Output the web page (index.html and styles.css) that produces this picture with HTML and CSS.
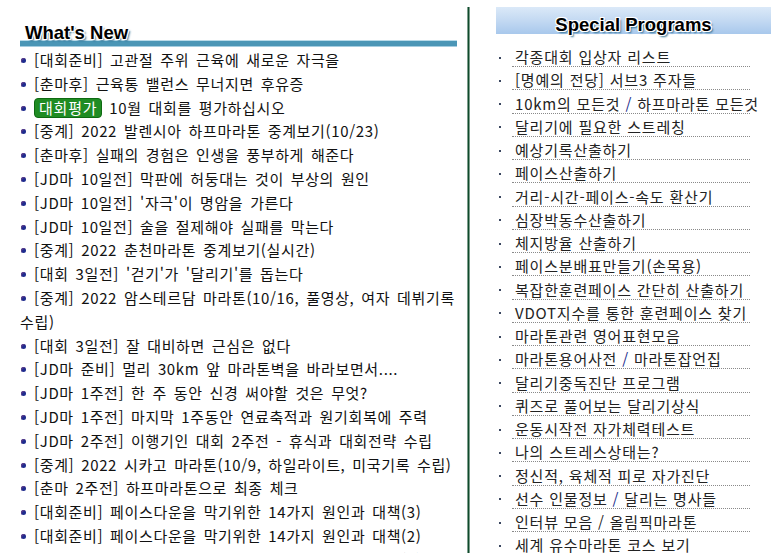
FILE: index.html
```html
<!DOCTYPE html>
<html lang="ko">
<head>
<meta charset="utf-8">
<title>What's New / Special Programs</title>
<link rel="stylesheet" href="styles.css">
</head>
<body>
<div class="page">
  <section class="news">
    <h2 class="news-head"><span class="head-text">What's New</span></h2>
    <ul class="news-list">
      <li>[대회준비] 고관절 주위 근육에 새로운 자극을</li>
      <li>[춘마후] 근육통 밸런스 무너지면 후유증</li>
      <li><span class="badge">대회평가</span> 10월 대회를 평가하십시오</li>
      <li>[중계] 2022 발렌시아 하프마라톤 중계보기(10/23)</li>
      <li>[춘마후] 실패의 경험은 인생을 풍부하게 해준다</li>
      <li>[JD마 10일전] 막판에 허둥대는 것이 부상의 원인</li>
      <li>[JD마 10일전] '자극'이 명암을 가른다</li>
      <li>[JD마 10일전] 술을 절제해야 실패를 막는다</li>
      <li>[중계] 2022 춘천마라톤 중계보기(실시간)</li>
      <li>[대회 3일전] '걷기'가 '달리기'를 돕는다</li>
      <li>[중계] 2022 암스테르담 마라톤(10/16, 풀영상, 여자 데뷔기록 수립)</li>
      <li>[대회 3일전] 잘 대비하면 근심은 없다</li>
      <li>[JD마 준비] 멀리 30km 앞 마라톤벽을 바라보면서....</li>
      <li>[JD마 1주전] 한 주 동안 신경 써야할 것은 무엇?</li>
      <li>[JD마 1주전] 마지막 1주동안 연료축적과 원기회복에 주력</li>
      <li>[JD마 2주전] 이행기인 대회 2주전 - 휴식과 대회전략 수립</li>
      <li>[중계] 2022 시카고 마라톤(10/9, 하일라이트, 미국기록 수립)</li>
      <li>[춘마 2주전] 하프마라톤으로 최종 체크</li>
      <li>[대회준비] 페이스다운을 막기위한 14가지 원인과 대책(3)</li>
      <li>[대회준비] 페이스다운을 막기위한 14가지 원인과 대책(2)</li>
      <li>[대회준비] 페이스다운을 막기위한 14가지 원인과 대책(1)</li>
    </ul>
  </section>
  <div class="divider"></div>
  <section class="programs">
    <h2 class="prog-head"><span class="head-text">Special Programs</span></h2>
    <ul class="prog-list">
      <li><span class="link">각종대회 입상자 리스트</span></li>
      <li><span class="link">[명예의 전당] 서브3 주자들</span></li>
      <li><span class="link">10km의 모든것 <span class="sep">/</span> 하프마라톤 모든것</span></li>
      <li><span class="link">달리기에 필요한 스트레칭</span></li>
      <li><span class="link">예상기록산출하기</span></li>
      <li><span class="link">페이스산출하기</span></li>
      <li><span class="link">거리-시간-페이스-속도 환산기</span></li>
      <li><span class="link">심장박동수산출하기</span></li>
      <li><span class="link">체지방율 산출하기</span></li>
      <li><span class="link">페이스분배표만들기(손목용)</span></li>
      <li><span class="link">복잡한훈련페이스 간단히 산출하기</span></li>
      <li><span class="link">VDOT지수를 통한 훈련페이스 찾기</span></li>
      <li><span class="link">마라톤관련 영어표현모음</span></li>
      <li><span class="link">마라톤용어사전 <span class="sep">/</span> 마라톤잡언집</span></li>
      <li><span class="link">달리기중독진단 프로그램</span></li>
      <li><span class="link">퀴즈로 풀어보는 달리기상식</span></li>
      <li><span class="link">운동시작전 자가체력테스트</span></li>
      <li><span class="link">나의 스트레스상태는?</span></li>
      <li><span class="link">정신적, 육체적 피로 자가진단</span></li>
      <li><span class="link">선수 인물정보 <span class="sep">/</span> 달리는 명사들</span></li>
      <li><span class="link">인터뷰 모음 / 올림픽마라톤</span></li>
      <li><span class="link">세계 유수마라톤 코스 보기</span></li>
    </ul>
  </section>
</div>
</body>
</html>
```
FILE: styles.css
```css
html, body {
  margin: 0;
  padding: 0;
  background: #ffffff;
}
body {
  font-family: "Noto Sans CJK KR", "Liberation Sans", sans-serif;
  color: #111;
  overflow: hidden;
}
.page {
  display: flex;
  align-items: flex-start;
  height: 553px;
}
ul {
  list-style: none;
  margin: 0;
  padding: 0;
}
h2 {
  margin: 0;
  font-weight: normal;
}
.head-text {
  font-family: "Liberation Sans", "DejaVu Sans", sans-serif;
  font-weight: bold;
  font-size: 18.5px;
  color: #000;
  text-shadow:
    1px 0 0 #fff, -1px 0 0 #fff, 0 1px 0 #fff, 0 -1px 0 #fff,
    1px 1px 0 #fff, -1px -1px 0 #fff, 1px -1px 0 #fff, -1px 1px 0 #fff,
    2px 2px 2px #2e6f92;
}

/* left column */
.news {
  width: 437px;
  margin-left: 20px;
  margin-top: 20px;
}
.news-head {
  height: 27px;
  padding-left: 5px;
  line-height: 17px;
  background: linear-gradient(to bottom,
    transparent 0, transparent 20px,
    #b9dbe9 20px, #b9dbe9 21px,
    #4b96b6 21px, #4b96b6 26px,
    #a5cde0 26px, #a5cde0 27px);
}
.news-list {
  margin-top: 1px;
  width: 447px;
}
.news-list li {
  font-size: 15px;
  line-height: 23.8px;
  letter-spacing: 0.65px;
  word-spacing: 2px;
  white-space: normal;
}
.news-list li::before {
  content: "";
  display: inline-block;
  width: 5px;
  height: 5px;
  border-radius: 50%;
  background: #1e2c8e;
  box-shadow: inset 1px 1px 0 #5a3b8a;
  margin-left: 1px;
  margin-right: 8px;
  vertical-align: 3px;
}
.badge {
  display: inline-block;
  background: #1f8c23;
  border: 1px solid #0e6a12;
  color: #fff;
  border-radius: 4px;
  padding: 0 4px;
  line-height: 18px;
  letter-spacing: 0.8px;
  word-spacing: 0;
}

/* divider */
.divider {
  width: 1px;
  margin-left: 10px;
  margin-top: 7px;
  height: 546px;
  background: #0f4a2c;
  border-left: 1px solid #7d9e8c;
  border-right: 1px solid #7d9e8c;
}

/* right column */
.programs {
  width: 275px;
  margin-left: 26px;
  margin-top: 7px;
}
.prog-head {
  height: 27px;
  line-height: 27px;
  text-align: center;
  background: linear-gradient(to bottom, #dbe9f8 0%, #c3d9f2 50%, #a8c8ec 100%);
}
.prog-list {
  margin-top: 14px;
}
.prog-list li {
  display: flex;
  align-items: center;
  padding-left: 3px;
  margin-bottom: 4.25px;
}
.prog-list li::before {
  content: "";
  width: 2px;
  height: 2px;
  background: #3a4660;
  margin-right: 11px;
  flex: none;
}
.link {
  display: block;
  width: 235px;
  padding-left: 3px;
  font-size: 15px;
  line-height: 18px;
  letter-spacing: 0.8px;
  white-space: nowrap;
  color: #222;
  border-bottom: 1px dotted #8a8a8a;
}
.sep {
  color: #1a2a8a;
}
```
